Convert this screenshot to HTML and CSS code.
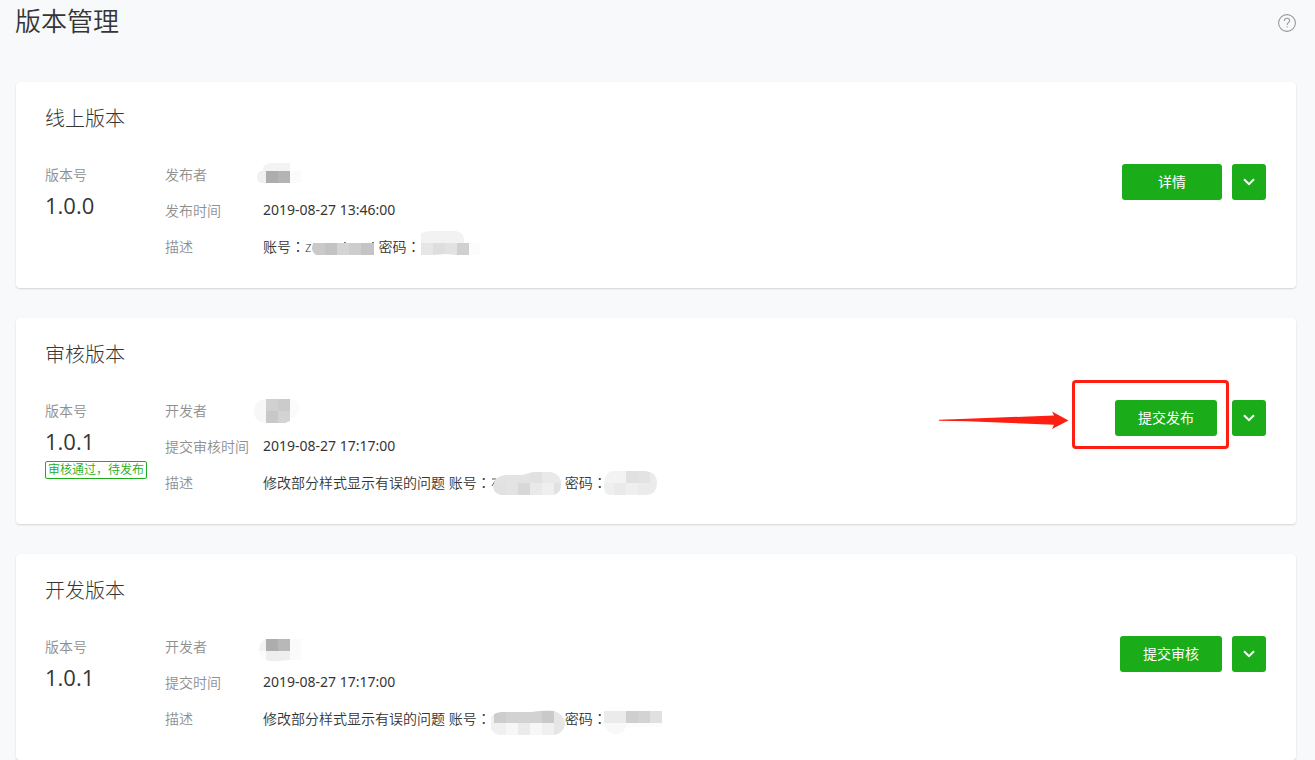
FILE: index.html
```
<!DOCTYPE html>
<html lang="zh-CN">
<head>
    <meta charset="UTF-8">
    <meta name="viewport" content="width=device-width, initial-scale=1.0">
    <title>版本管理</title>
    <link rel="stylesheet" href="styles.css">
</head>
<body>
    <header class="page-header">
        <h1 class="page-title">版本管理</h1>
        <a class="help" href="#" aria-label="帮助">
            <svg width="18" height="18" viewBox="1 1 18 18" fill="none" stroke="#9a9a9a">
                <circle cx="10" cy="10" r="8.4" stroke-width="1.1"/>
                <path d="M7.4 8c0-1.700 1.100-2.700 2.600-2.700s2.600 1 2.600 2.400c0 2-2.500 2-2.500 4.300M10.100 13.200v1.200" stroke-width="1.100"/>
            </svg>
        </a>
    </header>

    <main class="version-list">
        <section class="card">
            <h2 class="card-title">线上版本</h2>
            <div class="card-body">
                <div class="version">
                    <div class="label">版本号</div>
                    <div class="number">1.0.0</div>
                </div>
                <dl class="info">
                    <dt>发布者</dt>
                    <dd><svg class="mosaic mosaic-name" viewBox="253 157 50 36" width="50">
                        <path d="M263 171v-3q1-4 8-5h19v8z" fill="#f3f3f3"/>
                        <path d="M266 171v12h-5q-4-1-4-6t4-6z" fill="#f0f0f0"/>
                        <path d="M266 171h12v12h-12z" fill="#adadad"/>
                        <path d="M278 171h12v12h-12z" fill="#b4b4b4"/>
                        <path d="M290 171h11v12h-11z" fill="#fbfbfb"/>
                    </svg></dd>
                    <dt>发布时间</dt>
                    <dd class="time">2019-08-27 13:46:00</dd>
                    <dt>描述</dt>
                    <dd>账号<span class="mark" lang="zh-TW">：</span>z<svg class="mosaic" viewBox="312 229 67 36" width="67">
                        <path d="M314 243h12v12h-9q-4-3-4-7z" fill="#c9c9c9"/>
                        <path d="M326 243h12v12h-12z" fill="#c3c3c3"/>
                        <path d="M338 243h12v12h-12z" fill="#d4d4d4"/>
                        <path d="M350 243h12v12h-12z" fill="#cdcdcd"/>
                        <path d="M362 243h13v12h-13z" fill="#c4c4c4"/>
                        <path d="M345 242h2v1h-2zM373 242h2v1h-2z" fill="#777"/>
                    </svg>密码<span class="mark" lang="zh-TW">：</span><svg class="mosaic" viewBox="421 229 64 36" width="64">
                        <path d="M422 243v-10q5-2 12-2h23q8 2 8 8v4z" fill="#f2f2f2"/>
                        <path d="M422 243h12v12h-12z" fill="#e6e6e6"/>
                        <path d="M434 243h12v11l-12 1z" fill="#dedede"/>
                        <path d="M446 243h12v12l-12-1z" fill="#e2e2e2"/>
                        <path d="M458 243h12v12h-12z" fill="#d0d0d0"/>
                        <path d="M470 243h11v12h-11z" fill="#fcfcfc"/>
                    </svg></dd>
                </dl>
                <div class="actions">
                    <button class="btn" type="button">详情</button>
                    <button class="btn btn-more" type="button" aria-label="更多">
                        <svg width="12" height="8" viewBox="0 0 12 8"><path d="M1 1.200L6 6.200 11 1.200" fill="none" stroke="#fff" stroke-width="2"/></svg>
                    </button>
                </div>
            </div>
        </section>

        <section class="card">
            <h2 class="card-title">审核版本</h2>
            <div class="card-body">
                <div class="version">
                    <div class="label">版本号</div>
                    <div class="number">1.0.1</div>
                    <div class="status">审核通过，待发布</div>
                </div>
                <dl class="info">
                    <dt>开发者</dt>
                    <dd><svg class="mosaic mosaic-name" viewBox="253 393 50 36" width="50">
                        <path d="M266 399v24q-12-1-12-12t12-12z" fill="#f7f7f7"/>
                        <path d="M266 399h12v12h-12z" fill="#d0d0d0"/>
                        <path d="M278 399h12v12h-12z" fill="#cbcbcb"/>
                        <path d="M266 411h12v12h-12z" fill="#c8c8c8"/>
                        <path d="M278 411h12v10l-5 2h-7z" fill="#d3d3d3"/>
                        <path d="M290 399q9 1 9 10t-9 9z" fill="#fbfbfb"/>
                    </svg></dd>
                    <dt>提交审核时间</dt>
                    <dd class="time">2019-08-27 17:17:00</dd>
                    <dt>描述</dt>
                    <dd>修改部分样式显示有误的问题 账号<span class="mark" lang="zh-TW">：</span><svg class="mosaic" viewBox="491 465 74 36" width="74">
                        <defs>
                            <clipPath id="blob-a"><path d="M493 487q1-11 12-12h17q8-3 16-3h12q11 2 11 12 0 11-11 11h-47q-9-1-10-8z"/></clipPath>
                        </defs>
                        <path d="M492 479h4M492 486l3-5" fill="none" stroke="#555"/>
                        <g clip-path="url(#blob-a)">
                            <path d="M490 470h72v26h-72z" fill="#e3e3e3"/>
                            <path d="M530 470h12v13h-12zM494 483h12v12h-12z" fill="#e1e1e1"/>
                            <path d="M542 470h20v13h-20zM530 483h12v12h-12z" fill="#e9e9e9"/>
                            <path d="M518 483h12v12h-12z" fill="#d8d8d8"/>
                            <path d="M542 483h12v12h-12z" fill="#efefef"/>
                            <path d="M554 483h12v12h-12z" fill="#e2e2e2"/>
                        </g>
                    </svg>密码<span class="mark" lang="zh-TW">：</span><svg class="mosaic mosaic-over" viewBox="603 465 58 36" width="58">
                        <defs>
                            <clipPath id="blob-b"><path d="M604 487q0-15 9-16h32q12 1 12 12 0 11-10 12h-38q-5-1-5-8z"/></clipPath>
                        </defs>
                        <g clip-path="url(#blob-b)">
                            <path d="M603 470h23v13h-23z" fill="#f3f3f3"/>
                            <path d="M626 470h12v13h-12z" fill="#e1e1e1"/>
                            <path d="M638 470h12v13h-12z" fill="#e3e3e3"/>
                            <path d="M603 483h11v12h-11zM626 483h12v12h-12z" fill="#efefef"/>
                            <path d="M614 483h12v12h-12z" fill="#eaeaea"/>
                            <path d="M638 483h12v12h-12zM650 470h8v25h-8z" fill="#ebebeb"/>
                        </g>
                    </svg></dd>
                </dl>
                <div class="actions actions-marked">
                    <button class="btn" type="button">提交发布</button>
                    <button class="btn btn-more" type="button" aria-label="更多">
                        <svg width="12" height="8" viewBox="0 0 12 8"><path d="M1 1.200L6 6.200 11 1.200" fill="none" stroke="#fff" stroke-width="2"/></svg>
                    </button>
                    <div class="frame"></div>
                    <svg class="arrow" width="130" height="20" viewBox="0 0 130 20" fill="#ff1e12">
                        <path d="M0 9.800L28 8.800 115 5.500 113 1.500 129.500 10.500 113 19 115 14.700 28 11.200 0 10.800z"/>
                    </svg>
                </div>
            </div>
        </section>

        <section class="card">
            <h2 class="card-title">开发版本</h2>
            <div class="card-body">
                <div class="version">
                    <div class="label">版本号</div>
                    <div class="number">1.0.1</div>
                </div>
                <dl class="info">
                    <dt>开发者</dt>
                    <dd><svg class="mosaic mosaic-name" viewBox="253 629 50 36" width="50">
                        <path d="M266 639v12h-7q0-9 7-12z" fill="#f3f3f3"/>
                        <path d="M266 639h12v12h-12z" fill="#adadad"/>
                        <path d="M278 639h12v12h-12z" fill="#b8b8b8"/>
                        <path d="M290 639h11v21h-11zM259 651h7v9q-6-3-7-9z" fill="#fbfbfb"/>
                        <path d="M266 651h24v9l-12 1q-8 1-12-1z" fill="#eee"/>
                    </svg></dd>
                    <dt>提交时间</dt>
                    <dd class="time">2019-08-27 17:17:00</dd>
                    <dt>描述</dt>
                    <dd>修改部分样式显示有误的问题 账号<span class="mark" lang="zh-TW">：</span><svg class="mosaic" viewBox="491 701 74 36" width="74">
                        <defs>
                            <clipPath id="blob-c"><path d="M489 723q1-10 13-11h30q12-2 22-1 10 3 11 13-1 9-11 11h-55q-9-2-10-12z"/></clipPath>
                        </defs>
                        <g clip-path="url(#blob-c)">
                            <path d="M488 710h78v26h-78z" fill="#f0f0f0"/>
                            <path d="M494 710h12v13h-12z" fill="#cdcdcd"/>
                            <path d="M506 710h36v13h-36z" fill="#d2d2d2"/>
                            <path d="M542 710h12v13h-12z" fill="#c9c9c9"/>
                            <path d="M506 723h12v12h-12zM530 723h12v12h-12z" fill="#f7f7f7"/>
                            <path d="M518 723h12v12h-12z" fill="#ebebeb"/>
                            <path d="M554 710h12v26h-12z" fill="#e6e6e6"/>
                        </g>
                    </svg>密码<span class="mark" lang="zh-TW">：</span><svg class="mosaic mosaic-over" viewBox="603 701 60 36" width="60">
                        <path d="M604 711h22v12h-22z" fill="#ebebeb"/>
                        <path d="M626 711h12v12h-12z" fill="#cfcfcf"/>
                        <path d="M638 711h12v12h-12z" fill="#d3d3d3"/>
                        <path d="M650 711h12v12h-12z" fill="#e0e0e0"/>
                        <path d="M604 723h22v4q-3 7-11 7t-11-11z" fill="#f8f8f8"/>
                        <path d="M626 723h36v4h-36z" fill="#fcfcfc"/>
                    </svg></dd>
                </dl>
                <div class="actions">
                    <button class="btn" type="button">提交审核</button>
                    <button class="btn btn-more" type="button" aria-label="更多">
                        <svg width="12" height="8" viewBox="0 0 12 8"><path d="M1 1.200L6 6.200 11 1.200" fill="none" stroke="#fff" stroke-width="2"/></svg>
                    </button>
                </div>
            </div>
        </section>
    </main>
</body>
</html>
```

FILE: styles.css
```
* {
    box-sizing: border-box;
}
body {
    margin: 0;
    padding: 0 19px 0 15px;
    background: #f8f9fb;
    color: #353535;
    font-family: "Open Sans", "Noto Sans CJK SC", sans-serif;
    font-size: 14px;
    font-weight: 350;
}
h1, h2, dl, dd {
    margin: 0;
}
.page-header {
    display: flex;
    justify-content: space-between;
    align-items: flex-start;
    padding-bottom: 36px;
}
.page-title {
    font-size: 26px;
    font-weight: 350;
    line-height: 42px;
}
.help {
    display: flex;
    align-items: center;
    height: 46px;
}
.version-list {
    display: grid;
    gap: 30px;
    margin-left: 1px;
}
.card {
    padding: 22px 30px 23px 29px;
    background: #fff;
    border-radius: 4px;
    box-shadow: 0 1px 2px rgba(0, 0, 0, 0.15);
}
.card-title {
    margin-bottom: 23px;
    font-size: 20px;
    font-weight: 300;
    line-height: 30px;
}
.card-body {
    display: flex;
    align-items: flex-start;
}
.version {
    width: 120px;
}
.label,
.info dt {
    color: #8f8f8f;
    line-height: 36px;
}
.number {
    font-size: 22px;
    font-weight: 400;
    line-height: 24px;
}
.status {
    display: inline-block;
    margin-top: 8px;
    padding: 0 2px;
    border: 1px solid #1aad19;
    border-radius: 2px;
    color: #1aad19;
    font-size: 12px;
    line-height: 16px;
    white-space: nowrap;
}
.info {
    flex: 1;
    display: grid;
    grid-template-columns: 98px 1fr;
}
.info dt,
.info dd {
    height: 36px;
    line-height: 36px;
    white-space: nowrap;
}
.info .time {
    font-family: "Noto Sans", sans-serif;
    font-weight: 400;
    line-height: 34px;
}
/* centred full-width punctuation */
.mark {
    font-family: "Noto Sans CJK TC", sans-serif;
    line-height: 1;
}
.mosaic {
    position: relative;
    height: 36px;
    vertical-align: top;
}
.mosaic-name {
    margin-left: -10px;
}
.mosaic-over {
    margin-left: -4px;
}
.actions {
    position: relative;
    display: flex;
    gap: 10px;
    margin-top: 7px;
}
.actions-marked {
    gap: 15px;
}
.btn {
    min-width: 100px;
    height: 36px;
    padding: 0 23px 2px;
    border: none;
    border-radius: 3px;
    background: #1aad19;
    color: #fff;
    font: inherit;
    font-weight: 400;
    cursor: pointer;
}
.btn-more {
    display: flex;
    align-items: center;
    justify-content: center;
    min-width: 34px;
    padding: 0;
}
.frame {
    position: absolute;
    top: -20px;
    left: -43px;
    width: 157px;
    height: 69px;
    border: 3px solid #ff1e12;
    border-radius: 4px;
    pointer-events: none;
}
.arrow {
    position: absolute;
    top: 10px;
    left: -176px;
}
```
